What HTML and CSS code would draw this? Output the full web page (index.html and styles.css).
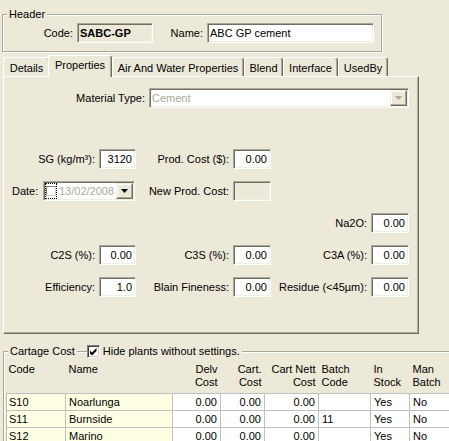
FILE: index.html
```html
<!DOCTYPE html>
<html>
<head>
  <meta charset="UTF-8">
  <title>Material - Properties</title>
<link rel="stylesheet" href="styles.css">
</head>
<body>
<div class="window">

  <!-- Header -->
  <fieldset class="group header-group">
    <legend>Header</legend>
    <div class="header-row">
      <label class="code-label">Code:</label>
      <span class="field readonly code-field">SABC-GP</span>
      <label class="name-label">Name:</label>
      <span class="field name-field">ABC GP cement</span>
    </div>
  </fieldset>

  <!-- Tabs -->
  <div class="tabs">
    <div class="tab tab-details">Details</div>
    <div class="tab tab-properties active">Properties</div>
    <div class="tab tab-air">Air And Water Properties</div>
    <div class="tab tab-blend">Blend</div>
    <div class="tab tab-interface">Interface</div>
    <div class="tab tab-usedby">UsedBy</div>
  </div>

  <div class="panel">
    <div class="material-row">
      <label>Material Type:</label>
      <div class="combo">
        <span class="combo-text">Cement</span>
        <span class="drop-btn"><svg width="7" height="4" viewBox="0 0 7 4"><path d="M0 0H7L3.5 4Z" fill="#ACA899"/></svg></span>
      </div>
    </div>

    <div class="props">
      <div class="prop-row">
        <label>SG (kg/m³):</label>
        <span class="field">3120</span>
        <label>Prod. Cost ($):</label>
        <span class="field">0.00</span>
      </div>
      <div class="prop-row">
        <div class="date-cell">
          <label>Date:</label>
          <div class="datepick">
            <span class="dp-focus"><span class="dp-box"></span></span>
            <span class="dp-text">13/02/2008</span>
            <span class="drop-btn"><svg width="7" height="4" viewBox="0 0 7 4"><path d="M0 0H7L3.5 4Z" fill="#000"/></svg></span>
          </div>
        </div>
        <label>New Prod. Cost:</label>
        <span class="field readonly"></span>
      </div>
      <div class="prop-row">
        <label class="col5">Na2O:</label>
        <span class="field">0.00</span>
      </div>
      <div class="prop-row">
        <label>C2S (%):</label>
        <span class="field">0.00</span>
        <label>C3S (%):</label>
        <span class="field">0.00</span>
        <label>C3A (%):</label>
        <span class="field">0.00</span>
      </div>
      <div class="prop-row">
        <label>Efficiency:</label>
        <span class="field">1.0</span>
        <label>Blain Fineness:</label>
        <span class="field">0.00</span>
        <label>Residue (&lt;45µm):</label>
        <span class="field">0.00</span>
      </div>
    </div>
  </div>

  <!-- Cartage Cost -->
  <div class="cartage">
    <div class="cap-row">
      <span class="cap-corner"></span>
      <span class="cap-text">Cartage Cost</span>
      <span class="cap-line short"></span>
      <span class="checkbox"><svg width="9" height="9" viewBox="0 0 9 9"><path d="M1 3.5L3 5.5L7.5 1V4L3 8.5L1 6.5Z" fill="#000"/></svg></span>
      <span class="cap-text">Hide plants without settings.</span>
      <span class="cap-line fill"></span>
    </div>
    <div class="cart-body">
      <table class="grid">
        <colgroup>
          <col style="width:59px"><col style="width:107px"><col style="width:48px"><col style="width:44px">
          <col style="width:54px"><col style="width:52px"><col style="width:39px"><col style="width:60px">
        </colgroup>
        <thead>
          <tr>
            <th class="first">Code</th>
            <th>Name</th>
            <th class="num">Delv<br>Cost</th>
            <th class="num">Cart.<br>Cost</th>
            <th class="num">Cart Nett<br>Cost</th>
            <th>Batch<br>Code</th>
            <th>In<br>Stock</th>
            <th>Man<br>Batch</th>
          </tr>
        </thead>
        <tbody>
          <tr>
            <td class="key first">S10</td><td class="key">Noarlunga</td>
            <td class="num">0.00</td><td class="num">0.00</td><td class="num">0.00</td>
            <td></td><td>Yes</td><td>No</td>
          </tr>
          <tr>
            <td class="key first">S11</td><td class="key">Burnside</td>
            <td class="num">0.00</td><td class="num">0.00</td><td class="num">0.00</td>
            <td>11</td><td>Yes</td><td>No</td>
          </tr>
          <tr>
            <td class="key first">S12</td><td class="key">Marino</td>
            <td class="num">0.00</td><td class="num">0.00</td><td class="num">0.00</td>
            <td></td><td>Yes</td><td>No</td>
          </tr>
        </tbody>
      </table>
    </div>
  </div>

</div>
</body>
</html>
```

FILE: styles.css
```css
html, body {
  margin: 0;
  padding: 0;
  height: 100%;
  overflow: hidden;
  background: #ECE9D8;
  font-family: "Liberation Sans", Arial, sans-serif;
  font-size: 11px;
  color: #000;
}
.window {
  width: 449px;
}

/* sunken text box */
.field {
  display: block;
  box-sizing: border-box;
  height: 20px;
  border: 1px solid;
  border-color: #ACA899 #fff #fff #ACA899;
  box-shadow: inset 1px 1px 0 #716F64, inset -1px -1px 0 #F1EFE2;
  background: #fff;
  padding: 0 3px 0 3px;
  line-height: 18px;
  text-align: right;
  white-space: nowrap;
  overflow: hidden;
}
.field.readonly {
  background: #ECE9D8;
}

/* etched group frame */
.group {
  margin: 0;
  padding: 0;
  border: 1px solid #ACA899;
  box-shadow: inset 1px 1px 0 #fff, 1px 1px 0 #fff;
}
.group legend {
  margin-left: 4px;
  padding: 0 2px;
  line-height: 13px;
  background: #ECE9D8;
}
.header-group {
  margin: 8px 0 0 2px;
  width: 380px;
  box-sizing: border-box;
}
.header-row {
  display: flex;
  align-items: center;
  padding: 2px 0 8px;
}
.header-row label {
  text-align: right;
  padding-right: 4px;
  box-sizing: border-box;
}
.code-label {
  width: 74px;
}
.name-label {
  width: 54px;
}
.header-row .field {
  text-align: left;
  padding-left: 2px;
}
.code-field {
  width: 76px;
  font-weight: bold;
}
.name-field {
  width: 167px;
}

/* tabs */
.tabs {
  display: flex;
  align-items: flex-end;
  height: 22px;
  margin: 2px 0 0 3px;
}
.tab {
  box-sizing: border-box;
  height: 19px;
  padding-top: 4px;
  line-height: 13px;
  text-align: center;
  white-space: nowrap;
  border: 1px solid;
  border-color: #fff #716F64 transparent #fff;
  border-bottom: 0;
  border-radius: 3px 3px 0 0;
  box-shadow: inset -1px 0 0 #ACA899;
  background: #ECE9D8;
}
.tab.active {
  height: 22px;
  padding-top: 3px;
  margin-left: -2px;
  margin-bottom: -1px;
  position: relative;
  z-index: 1;
}
.tab-details { width: 47px; }
.tab-properties { width: 64px; }
.tab-air { width: 132px; }
.tab-blend { width: 39px; }
.tab-interface { width: 55px; }
.tab-usedby { width: 50px; }

.panel {
  box-sizing: border-box;
  width: 416px;
  height: 258px;
  margin-left: 3px;
  padding-top: 11px;
  border: 1px solid;
  border-color: #fff #716F64 #716F64 #fff;
  box-shadow: inset -1px -1px 0 #ACA899;
}
.material-row {
  display: flex;
  align-items: center;
}
.material-row label {
  width: 145px;
  box-sizing: border-box;
  padding-right: 4px;
  text-align: right;
}
.combo {
  display: flex;
  align-items: center;
  box-sizing: border-box;
  width: 260px;
  height: 20px;
  border: 1px solid;
  border-color: #ACA899 #fff #fff #ACA899;
  box-shadow: inset 1px 1px 0 #716F64, inset -1px -1px 0 #F1EFE2;
  background: #fff;
  padding-right: 1px;
}
.combo-text {
  padding-left: 2px;
  color: #ACA899;
}
.drop-btn {
  margin-left: auto;
  width: 17px;
  height: 16px;
  box-sizing: border-box;
  background: #ECE9D8;
  border: 1px solid;
  border-color: #F1EFE2 #716F64 #716F64 #F1EFE2;
  box-shadow: inset -1px -1px 0 #ACA899, inset 1px 1px 0 #fff;
  display: flex;
  align-items: center;
  justify-content: center;
}

.props {
  display: flex;
  flex-direction: column;
  gap: 12px;
  margin-top: 41px;
}
.prop-row {
  display: grid;
  grid-template-columns: 95px 37px 97px 38px 100px 38px;
  height: 20px;
}
.prop-row label {
  text-align: right;
  padding-right: 4px;
  line-height: 20px;
  white-space: nowrap;
}
.prop-row .col5 {
  grid-column: 5;
}
.date-cell {
  grid-column: 1 / 3;
  display: flex;
  align-items: center;
}
.prop-row .date-cell label {
  text-align: left;
  padding: 0 0 0 8px;
}
.datepick {
  margin-left: auto;
  margin-right: 1px;
  display: flex;
  align-items: center;
  box-sizing: border-box;
  width: 92px;
  height: 20px;
  border: 1px solid;
  border-color: #ACA899 #fff #fff #ACA899;
  box-shadow: inset 1px 1px 0 #716F64, inset -1px -1px 0 #F1EFE2;
  background: #fff;
  padding-right: 1px;
}
.dp-focus {
  width: 12px;
  height: 16px;
  margin-left: 1px;
  box-sizing: border-box;
  border: 1px dotted #000;
  display: flex;
  align-items: center;
  justify-content: center;
}
.dp-box {
  width: 10px;
  height: 10px;
  box-sizing: border-box;
  border: 1px solid;
  border-color: #808080 #D4D0C8 #D4D0C8 #808080;
}
.dp-text {
  margin-left: 2px;
  color: #ACA899;
}

/* cartage */
.cartage {
  margin: 11px 0 0 3px;
  width: 460px;
}
.cap-row {
  display: flex;
  align-items: center;
  height: 13px;
}
.cap-corner {
  align-self: flex-end;
  width: 5px;
  height: 7px;
  box-sizing: border-box;
  border-top: 1px solid #ACA899;
  border-left: 1px solid #ACA899;
  box-shadow: inset 1px 1px 0 #fff;
}
.cap-text {
  padding: 0 2px;
  line-height: 13px;
  white-space: nowrap;
}
.cap-line {
  height: 1px;
  background: #ACA899;
  box-shadow: 0 1px 0 #fff;
}
.cap-line.short {
  width: 10px;
}
.cap-line.fill {
  flex: 1;
}
.checkbox {
  width: 13px;
  height: 13px;
  box-sizing: border-box;
  border: 1px solid;
  border-color: #808080 #fff #fff #808080;
  box-shadow: inset 1px 1px 0 #404040, inset -1px -1px 0 #D4D0C8;
  background: #fff;
  display: flex;
  align-items: center;
  justify-content: center;
  margin-right: 1px;
}
.cart-body {
  border-left: 1px solid #ACA899;
  box-shadow: inset 1px 0 0 #fff;
  padding-left: 2px;
}
.grid {
  border-collapse: collapse;
  table-layout: fixed;
  width: 463px;
}
.grid th {
  font-weight: normal;
  text-align: left;
  vertical-align: top;
  padding: 5px 3px 4px;
  line-height: 13px;
  white-space: nowrap;
}
.grid td {
  padding: 0 3px;
  line-height: 16px;
  border: 1px solid #C0C0C0;
  background: #fff;
  white-space: nowrap;
  overflow: hidden;
}
.grid td.key {
  background: #FFFFE4;
}
.grid .first {
  padding-left: 2px;
}
.grid .num {
  text-align: right;
}
```
